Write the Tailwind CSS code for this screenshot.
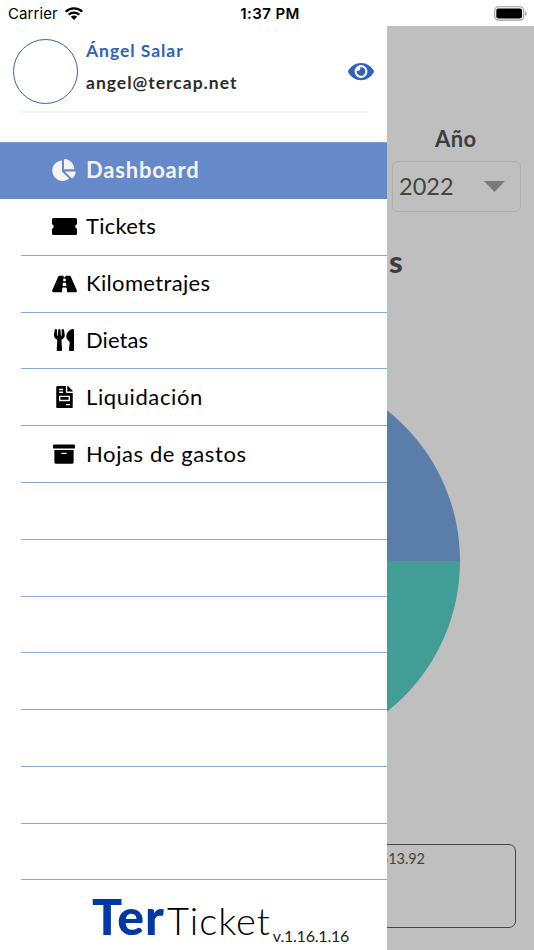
<!DOCTYPE html>
<html lang="es">
<head>
<meta charset="utf-8">
<title>TerTicket</title>
<script src="https://cdn.jsdelivr.net/npm/@tailwindcss/browser@4"></script>
</head>
<body class="w-[534px] h-[950px] overflow-hidden bg-white flex flex-col font-['Lato',sans-serif] text-black whitespace-nowrap">
<header class="h-[26px] shrink-0 grid grid-cols-[1fr_auto_1fr] items-center pl-2 pr-[7px] pt-[2px] font-['Inter',sans-serif] text-[15px] leading-6">
  <div class="flex items-center gap-[7px]"><span class="tracking-[0.1px]">Carrier</span>
    <svg class="w-[18px] h-[13px] -mt-[2px]" viewBox="0 0 18 13"><g fill="none" stroke="#000" stroke-width="2.3"><path d="M.8 4.7a11.7 11.7 0 0 1 16.4 0"/><path d="M3.7 7.8a7.6 7.6 0 0 1 10.6 0"/></g><path d="M9 13 5.8 9.8a4.6 4.6 0 0 1 6.4 0z"/></svg>
  </div>
  <span class="font-semibold tracking-[0.4px] pl-[5px]">1:37 PM</span>
  <svg class="justify-self-end w-[33px] h-[15px] -mt-[1px]" viewBox="0 0 33 15"><rect x=".7" y=".7" width="29" height="13.4" rx="3.8" fill="#fff" stroke="#999" stroke-width="1.1"/><rect x="2.3" y="2.4" width="25.8" height="10" rx="2.2"/><path d="M31.2 5v5q1.5-.8 1.5-2.5T31.2 5z" fill="#999"/></svg>
</header>
<div class="flex flex-1 min-h-0">
  <aside class="w-[387px] shrink-0 bg-white flex flex-col">
    <section class="h-[85px] shrink-0 flex pl-[13px] pr-[13px]">
      <div class="mt-[13px] w-[65px] h-[65px] rounded-full border-[1.5px] border-[#2f62b8] shrink-0"></div>
      <div class="ml-2 pt-[14px] font-bold text-[17.5px] leading-[22px]">
        <div class="text-[#2f62b8] tracking-[0.95px]">Ángel Salar</div>
        <div class="text-[#2c2c2c] tracking-[1px] mt-[10px]">angel@tercap.net</div>
      </div>
      <svg class="ml-auto mt-[34px] w-[26px] h-[23px]" viewBox="0 0 576 512" fill="#2f62b8"><path d="M572.52 241.4C518.29 135.59 410.93 64 288 64S57.68 135.64 3.48 241.41a32.35 32.35 0 0 0 0 29.19C57.71 376.41 165.07 448 288 448s230.32-71.64 284.52-177.41a32.35 32.35 0 0 0 0-29.19zM288 400a144 144 0 1 1 144-144 143.93 143.93 0 0 1-144 144zm0-240a95.31 95.31 0 0 0-25.31 3.79 47.85 47.85 0 0 1-66.9 66.9A95.78 95.78 0 1 0 288 160z"/></svg>
    </section>
    <div class="ml-5 mr-[19px] h-[2px] shrink-0 bg-[#f4f4f4]"></div>
    <nav class="mt-[29px] flex flex-col text-[22px]">
      <a class="h-[57px] bg-[#6689c9] border-t border-[#7d9bd2] flex items-center text-[#f4f4f4] font-bold">
        <span class="ml-[51px] w-[26px] mr-[9px] flex justify-center"><svg class="w-[24px] h-[22px] -mt-[2px]" viewBox="0 0 544 512" fill="currentColor"><path d="M527.79 288H290.5l158.03 158.03c6.04 6.04 15.98 6.53 22.19.68 38.7-36.46 65.32-85.61 73.13-140.86 1.34-9.46-6.51-17.85-16.06-17.85zm-15.83-64.8C503.72 103.74 408.26 8.28 288.8.04 279.68-.59 272 7.1 272 16.24V240h223.77c9.14 0 16.82-7.68 16.19-16.8zM224 288V50.71c0-9.55-8.39-17.4-17.84-16.06C86.99 51.49-4.1 155.6.14 280.37 4.5 408.51 114.83 513.59 243.03 511.98c50.4-.63 96.97-16.87 135.26-44.03 7.9-5.6 8.42-17.23 1.57-24.08L224 288z"/></svg></span>
        <span class="tracking-[0.8px] pb-[3px]">Dashboard</span></a>
      <a class="ml-[21px] h-[56.8px] border-b border-[#8aaadb] flex items-center">
        <span class="ml-[30px] w-[26px] mr-[9px] flex justify-center"><svg class="w-[25px] h-[17px]" viewBox="0 0 25 17"><path d="M1.5 0h22Q25 0 25 1.5v4.7a2.4 2.4 0 0 0 0 4.6v4.7q0 1.5-1.5 1.5h-22Q0 17 0 15.500v-4.7a2.400 2.400 0 0 0 0-4.600V1.500Q0 0 1.500 0z"/></svg></span>
        <span class="tracking-[0.25px] pb-[2px]">Tickets</span></a>
      <a class="ml-[21px] h-[56.8px] border-b border-[#8aaadb] flex items-center">
        <span class="ml-[30px] w-[26px] mr-[9px] flex justify-center"><svg class="w-[25px] h-[22px]" viewBox="0 0 576 512"><path d="M573.19 402.67l-139.79-320C428.43 71.29 417.6 64 405.68 64h-97.59l2.45 23.16c.5 4.72-3.21 8.84-7.96 8.84h-29.16c-4.75 0-8.46-4.12-7.96-8.84L267.91 64h-97.59c-11.93 0-22.76 7.29-27.73 18.67L2.8 402.67C-6.45 423.86 8.31 448 30.54 448h196.84l10.31-97.68c.86-8.14 7.72-14.32 15.91-14.32h68.8c8.19 0 15.05 6.18 15.91 14.32L348.62 448h196.84c22.23 0 36.99-24.14 27.73-45.33zM260.4 135.16a8 8 0 0 1 7.96-7.16h39.29c4.09 0 7.53 3.09 7.96 7.16l4.6 43.58c.75 7.09-4.81 13.26-11.93 13.26h-40.54c-7.13 0-12.68-6.17-11.93-13.26l4.59-43.58zM315.64 304h-55.29c-9.5 0-16.91-8.23-15.91-17.68l5.07-48c.86-8.14 7.72-14.32 15.91-14.32h45.15c8.19 0 15.05 6.18 15.91 14.32l5.07 48c1 9.45-6.41 17.68-15.91 17.68z"/></svg></span>
        <span class="tracking-[0.35px] pb-[2px]">Kilometrajes</span></a>
      <a class="ml-[21px] h-[56.8px] border-b border-[#8aaadb] flex items-center">
        <span class="ml-[30px] w-[26px] mr-[9px] flex justify-center"><svg class="w-[20px] h-[22px]" viewBox="0 0 416 512" preserveAspectRatio="none"><path d="M207.9 15.2c.8 4.7 16.1 94.5 16.1 128.8 0 52.3-27.8 89.6-68.9 104.6L168 486.7c.7 13.7-10.2 25.3-24 25.3H80c-13.7 0-24.7-11.5-24-25.3l12.9-238.1C27.7 233.6 0 196.2 0 144 0 109.6 15.3 19.9 16.1 15.2 19.3-5.1 61.4-5.4 64 16.3v141.2c1.3 3.4 15.1 3.2 16 0 1.4-25.3 7.9-139.2 8-141.8 3.3-20.8 44.7-20.8 47.9 0 .2 2.7 6.6 116.5 8 141.8.9 3.2 14.8 3.4 16 0V16.3c2.6-21.6 44.8-21.4 47.9-1.1zm119.2 285.7l-15 185.1c-1.2 14 9.9 26 23.9 26h56c13.3 0 24-10.7 24-24V24c0-13.2-10.7-24-24-24-82.5 0-221.4 178.5-64.9 300.9z"/></svg></span>
        <span class="tracking-[0.05px] pb-[2px]">Dietas</span></a>
      <a class="ml-[21px] h-[56.8px] border-b border-[#8aaadb] flex items-center">
        <span class="ml-[30px] w-[26px] mr-[9px] flex justify-center"><svg class="w-[17px] h-[22px]" viewBox="0 0 384 512"><path d="M288 256H96v64h192v-64zm89-151L279.1 7c-4.5-4.5-10.6-7-17-7H256v128h128v-6.1c0-6.3-2.5-12.4-7-16.9zm-153 31V0H24C10.7 0 0 10.7 0 24v464c0 13.3 10.7 24 24 24h336c13.3 0 24-10.7 24-24V160H248c-13.2 0-24-10.8-24-24zM64 72c0-4.42 3.58-8 8-8h80c4.42 0 8 3.58 8 8v16c0 4.42-3.58 8-8 8H72c-4.42 0-8-3.58-8-8V72zm0 64c0-4.42 3.58-8 8-8h80c4.42 0 8 3.58 8 8v16c0 4.42-3.58 8-8 8H72c-4.42 0-8-3.58-8-8v-16zm256 304c0 4.42-3.58 8-8 8h-80c-4.42 0-8-3.58-8-8v-16c0-4.42 3.58-8 8-8h80c4.42 0 8 3.58 8 8v16zm0-200v96c0 8.84-7.16 16-16 16H80c-8.84 0-16-7.16-16-16v-96c0-8.84 7.16-16 16-16h224c8.84 0 16 7.16 16 16z"/></svg></span>
        <span class="tracking-[0.6px] pb-[2px]">Liquidación</span></a>
      <a class="ml-[21px] h-[56.8px] border-b border-[#8aaadb] flex items-center">
        <span class="ml-[30px] w-[26px] mr-[9px] flex justify-center"><svg class="w-[22px] h-[22px]" viewBox="0 0 512 512"><path d="M32 448c0 17.7 14.3 32 32 32h384c17.7 0 32-14.3 32-32V160H32v288zm160-212c0-6.6 5.4-12 12-12h104c6.6 0 12 5.4 12 12v8c0 6.6-5.4 12-12 12H204c-6.6 0-12-5.4-12-12v-8zM480 32H32C14.3 32 0 46.3 0 64v48c0 8.8 7.2 16 16 16h480c8.8 0 16-7.2 16-16V64c0-17.7-14.3-32-32-32z"/></svg></span>
        <span class="tracking-[0.6px] pb-[2px]">Hojas de gastos</span></a>
      <div class="ml-[21px] h-[56.8px] border-b border-[#8aaadb]"></div>
      <div class="ml-[21px] h-[56.8px] border-b border-[#8aaadb]"></div>
      <div class="ml-[21px] h-[56.8px] border-b border-[#8aaadb]"></div>
      <div class="ml-[21px] h-[56.8px] border-b border-[#8aaadb]"></div>
      <div class="ml-[21px] h-[56.8px] border-b border-[#8aaadb]"></div>
      <div class="ml-[21px] h-[56.8px] border-b border-[#8aaadb]"></div>
      <div class="ml-[21px] h-[56.6px] border-b border-[#8aaadb]"></div>
    </nav>
    <footer class="flex items-baseline pl-[92px] h-[69px] leading-[69px] overflow-hidden">
      <span class="text-[50px] font-black text-[#0238a5] tracking-[1px] leading-[72px]">Ter</span>
      <span class="text-[38px] font-light tracking-[1px] ml-[2px]">Ticket</span>
      <span class="text-[16px] font-normal text-[#222] -tracking-[0.2px] ml-[2px] relative top-[7px]">v.1.16.1.16</span>
    </footer>
  </aside>
  <main class="flex-1 bg-[#bfbfbf] overflow-hidden flex flex-col text-[#3d3d3d]">
    <div class="mt-[99px] ml-[5px] w-[129px] flex flex-col shrink-0">
      <div class="h-[28px] leading-[28px] font-bold text-[22px] tracking-[0.4px] pl-[43px]">Año</div>
      <div class="mt-[8px] h-[51px] border-[1.3px] border-[#adadad] rounded-[6px] flex items-center justify-between pl-[6px] pr-[15px] text-[23.5px] text-[#444]">
        <span>2022</span>
        <svg class="w-[21px] h-[11px]" viewBox="0 0 21 11"><path d="M0 0h21L10.5 11z" fill="#7a7a7a"/></svg>
      </div>
    </div>
    <div class="mt-[31px] h-[36px] leading-[36px] pl-[2px] font-black text-[31px] shrink-0">s</div>
    <svg class="mt-[90px] w-[147px] h-[384px] shrink-0" viewBox="0 0 147 384"><path d="M-119 192V0A192 192 0 0 1 73 192z" fill="#5b7da9"/><path d="M-119 192H73A192 192 0 0 1-119 384z" fill="#419d96"/></svg>
    <div class="mt-[91px] -ml-[20px] w-[149px] h-[84px] border-[1.5px] border-[#454545] rounded-[7px] shrink-0 pl-[12px] pt-[4px] text-[14.5px] leading-5 -tracking-[0.1px] text-[#444]">513.92</div>
  </main>
</div>
</body>
</html>
